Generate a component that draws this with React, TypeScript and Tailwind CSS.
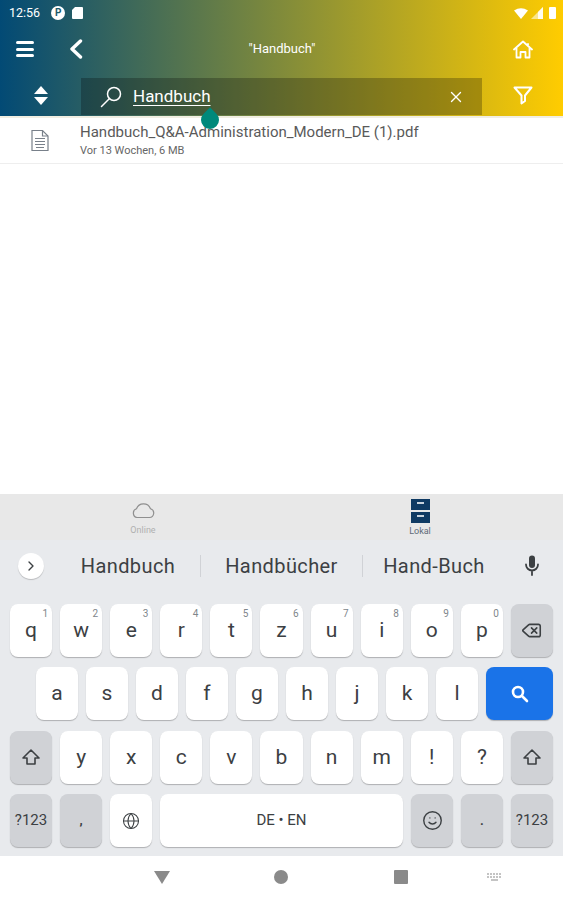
import React from 'react';
import { ChevronRight, Delete, Globe, Smile, X } from 'lucide-react';

const row1 = [['q', '1'], ['w', '2'], ['e', '3'], ['r', '4'], ['t', '5'], ['z', '6'], ['u', '7'], ['i', '8'], ['o', '9'], ['p', '0']];
const row2 = ['a', 's', 'd', 'f', 'g', 'h', 'j', 'k', 'l'];
const row3 = ['y', 'x', 'c', 'v', 'b', 'n', 'm', '!', '?'];

function Key({ label, hint, dark, className, children }: { label?: string; hint?: string; dark?: boolean; className?: string; children?: React.ReactNode }) {
  return (
    <div className={`relative flex items-center justify-center rounded-lg shadow-[0_1px_1px_rgba(0,0,0,0.25)] text-[#3c4043] ${dark ? 'bg-[#d0d2d6]' : 'bg-white'} ${className ?? 'flex-1'}`}>
      {label && <span className="text-[21px] leading-none">{label}</span>}
      {hint && <span className="absolute top-[5px] right-[4px] text-[10px] leading-none text-[#80868b]">{hint}</span>}
      {children}
    </div>
  );
}

function ShiftIcon() {
  return (
    <svg width="20" height="18" viewBox="0 0 20 18" fill="none" stroke="#3c4043" strokeWidth="1.6" strokeLinejoin="round">
      <path d="M10 2 L18 10 H14 V16 H6 V10 H2 Z" />
    </svg>
  );
}

function SymbolsKey() {
  return <Key dark><span className="text-[15px] leading-none">?123</span></Key>;
}

export default function App() {
  return (
    <div className="relative flex h-[900px] w-[563px] flex-col overflow-hidden bg-white font-['Roboto',sans-serif]">
      {/* app header */}
      <header className="flex h-[116px] flex-col bg-linear-to-r/srgb from-[#024a75] to-[#ffcc00] text-white">
        <div className="flex h-[26px] items-center justify-between pl-[9px] pr-[7px]">
          <div className="flex items-center">
            <span className="text-[12.5px] leading-none">12:56</span>
            <div className="ml-[11px] flex h-[14px] w-[14px] items-center justify-center rounded-full bg-white text-[10px] font-bold leading-none text-[#1d5a6a]">P</div>
            <svg className="ml-[7px]" width="11" height="12" viewBox="0 0 11 12" fill="white"><path d="M3 0 H10 A1 1 0 0 1 11 1 V11 A1 1 0 0 1 10 12 H1 A1 1 0 0 1 0 11 V3 Z" /></svg>
          </div>
          <div className="flex items-center gap-[3px]">
            <svg width="14" height="11" viewBox="0 0 14 11" fill="white"><path d="M0 2.5 Q7 -2 14 2.5 L7 11 Z" /></svg>
            <svg width="12" height="12" viewBox="0 0 12 12"><path d="M12 0 V12 H0 Z" fill="white" fillOpacity="0.55" /><path d="M12 0 V12 H7 V5 Z" fill="white" fillOpacity="0.85" /></svg>
            <div className="ml-[3px] h-[12px] w-[7px] rounded-[1px] bg-white" />
          </div>
        </div>
        <div className="flex h-[46px] items-center">
          <div className="ml-[16px] flex w-[18px] flex-col gap-[3.5px]">
            <div className="h-[3px] rounded-full bg-white" />
            <div className="h-[3px] rounded-full bg-white" />
            <div className="h-[3px] rounded-full bg-white" />
          </div>
          <svg className="ml-[35px]" width="14" height="20" viewBox="0 0 14 20" fill="none" stroke="white" strokeWidth="3.4" strokeLinecap="round" strokeLinejoin="round">
            <path d="M11.5 2 L3 10 L11.5 18" />
          </svg>
          <div className="ml-[159px] w-[80px] text-center text-[13px]">"Handbuch"</div>
          <svg className="ml-[191px]" width="20" height="19" viewBox="0 0 20 19" fill="none" stroke="white" strokeWidth="1.8" strokeLinejoin="round" strokeLinecap="round">
            <path d="M1 9.5 L10 1.5 L19 9.5 M3.5 8 V17.5 H7.5 V12 H12.5 V17.5 H16.5 V8 M15 4 V5" />
          </svg>
        </div>
        <div className="mt-[6px] flex h-[37px]">
          <div className="flex w-[81px] items-center justify-center pb-[3px]">
            <div className="flex flex-col items-center gap-[3px]">
              <div className="h-0 w-0 border-x-[7.5px] border-b-[8px] border-x-transparent border-b-white" />
              <div className="h-0 w-0 border-x-[7.5px] border-t-[8px] border-x-transparent border-t-white" />
            </div>
          </div>
          <div className="flex w-[401px] items-center bg-black/25 pl-[19px] pr-[17px]">
            <svg width="22" height="22" viewBox="0 0 22 22" fill="none" stroke="white" strokeWidth="1.5" strokeLinecap="round">
              <circle cx="14" cy="8" r="6.5" />
              <path d="M9.5 12.5 L1.5 20.5" />
            </svg>
            <span className="ml-[11px] text-[17px] leading-none underline underline-offset-[3px]">Handbuch</span>
            <X className="ml-auto h-[18px] w-[18px]" strokeWidth={1.8} />
          </div>
          <div className="flex flex-1 items-center justify-center pb-[3px]">
            <svg width="20" height="19" viewBox="0 0 20 19" fill="none" stroke="white" strokeWidth="2" strokeLinejoin="round">
              <path d="M1.5 1.5 H18.5 L12 9.5 V15 L8.5 17.5 V9.5 Z" />
            </svg>
          </div>
        </div>
      </header>
      <div className="h-[2px] bg-[#f1eee2]" />

      {/* file list */}
      <div className="flex h-[46px] items-center border-b border-[#eeeeee] pb-[2px]">
        <div className="flex w-[80px] justify-center pt-[2px]">
          <svg width="18" height="23" viewBox="0 0 18 23" fill="none" stroke="#78808a" strokeWidth="1.2">
            <path d="M1 1.5 H11.5 L17 7 V21.5 H1 Z" />
            <path d="M11.5 1.5 V7 H17 M4 9.5 H14 M4 12.5 H14 M4 15.5 H14 M5 18.5 H13" />
          </svg>
        </div>
        <div className="flex flex-col">
          <span className="text-[15px] leading-[18px] text-[#5a5a5a]">Handbuch_Q&amp;A-Administration_Modern_DE (1).pdf</span>
          <span className="mt-[3px] text-[11px] leading-[13px] text-[#666666]">Vor 13 Wochen, 6 MB</span>
        </div>
      </div>
      <div className="flex-1" />

      {/* text selection handle */}
      <div className="absolute left-[201px] top-[111px] h-[18px] w-[18px] -rotate-45 rounded-full rounded-tr-none bg-[#00897b]" />

      {/* bottom tabs */}
      <nav className="grid h-[46px] grid-cols-2 bg-[#e8e8e8] px-[4.5px]">
        <div className="flex flex-col items-center pt-[8px]">
          <svg width="24" height="17" viewBox="0 0 24 17" fill="none" stroke="#8f8f8f" strokeWidth="1.2" strokeLinejoin="round">
            <path d="M6 15.5 H18.5 A4.5 4.5 0 0 0 19.5 6.7 A7.5 7.5 0 0 0 5.5 6.8 A4.5 4.5 0 0 0 6 15.5 Z" />
          </svg>
          <span className="mt-[6px] text-[9px] leading-[10px] text-[#b0b0b0]">Online</span>
        </div>
        <div className="flex flex-col items-center pt-[5px]">
          <div className="flex flex-col gap-[2px]">
            <div className="flex h-[11px] w-[19px] justify-center bg-[#0f3a63] pt-[3px]"><div className="h-[2px] w-[7px] bg-[#c9d3dd]" /></div>
            <div className="flex h-[11px] w-[19px] justify-center bg-[#0f3a63] pt-[3px]"><div className="h-[2px] w-[7px] bg-[#c9d3dd]" /></div>
          </div>
          <span className="mt-[3px] text-[9px] leading-[10px] text-[#5f6b78]">Lokal</span>
        </div>
      </nav>

      {/* keyboard */}
      <section className="flex h-[316px] flex-col bg-[#e8eaed] px-[10px] pb-[9px]">
        <div className="flex h-[50px] items-center pt-[1px] text-[20px] text-[#3c4043]">
          <div className="ml-[8px] flex h-[26px] w-[26px] items-center justify-center rounded-full bg-white shadow-[0_1px_1px_rgba(0,0,0,0.2)]">
            <ChevronRight className="h-[16px] w-[16px]" strokeWidth={2} />
          </div>
          <span className="ml-[12px] w-[144px] text-center tracking-[0.4px]">Handbuch</span>
          <div className="h-[22px] w-px bg-[#d0d2d6]" />
          <span className="w-[161px] text-center tracking-[0.4px]">Handbücher</span>
          <div className="h-[22px] w-px bg-[#d0d2d6]" />
          <span className="w-[142px] text-center tracking-[0.4px]">Hand-Buch</span>
          <svg className="ml-[20px]" width="14" height="21" viewBox="0 0 14 21" fill="none" stroke="#3c4043" strokeWidth="1.8" strokeLinecap="round">
            <rect x="4" y="0.5" width="6" height="12.5" rx="3" fill="#3c4043" stroke="none" />
            <path d="M1 9.5 A6 6 0 0 0 13 9.5 M7 15.5 V20" />
          </svg>
        </div>
        <div className="mt-[14px] flex flex-1 flex-col gap-[10.6px]">
          <div className="flex flex-1 gap-2">
            {row1.map(([k, h]) => <Key key={k} label={k} hint={h} />)}
            <Key dark><Delete className="h-[21px] w-[21px]" strokeWidth={1.8} /></Key>
          </div>
          <div className="flex flex-1 gap-2">
            <div className="w-[18px]" />
            {row2.map((k) => <Key key={k} label={k} />)}
            <Key className="w-[67px] !bg-[#1a73e8]">
              <svg width="19" height="19" viewBox="0 0 19 19" fill="none" stroke="white" strokeWidth="2.6" strokeLinecap="round">
                <circle cx="8" cy="8" r="5" />
                <path d="M12 12 L17 17" />
              </svg>
            </Key>
          </div>
          <div className="flex flex-1 gap-2">
            <Key dark><ShiftIcon /></Key>
            {row3.map((k) => <Key key={k} label={k} />)}
            <Key dark><ShiftIcon /></Key>
          </div>
          <div className="flex flex-1 gap-2">
            <div className="flex w-[142px] gap-2">
              <SymbolsKey />
              <Key dark><span className="text-[13px] font-bold leading-none">,</span></Key>
              <Key><Globe className="h-[18px] w-[18px]" strokeWidth={1.4} /></Key>
            </div>
            <Key className="w-[243px]"><span className="text-[15px] leading-none">DE • EN</span></Key>
            <div className="flex flex-1 gap-2">
              <Key dark><Smile className="h-[21px] w-[21px]" strokeWidth={1.6} /></Key>
              <Key dark><span className="text-[13px] font-bold leading-none">.</span></Key>
              <SymbolsKey />
            </div>
          </div>
        </div>
      </section>

      {/* system nav bar */}
      <footer className="flex h-[44px] items-center bg-white pb-[2px]">
        <div className="ml-[154px] h-0 w-0 border-x-[8px] border-t-[13px] border-x-transparent border-t-[#8a8a8a]" />
        <div className="ml-[104px] h-[14px] w-[14px] rounded-full bg-[#8a8a8a]" />
        <div className="ml-[106px] h-[14px] w-[14px] rounded-[1px] bg-[#8a8a8a]" />
        <div className="ml-[79px] grid grid-cols-5 gap-[1px]">
          {Array.from({ length: 10 }).map((_, i) => <div key={i} className="h-[2px] w-[2px] bg-[#c4c4c4]" />)}
          <div className="col-span-5 mx-auto h-[2px] w-[7px] bg-[#c4c4c4]" />
        </div>
      </footer>
    </div>
  );
}
